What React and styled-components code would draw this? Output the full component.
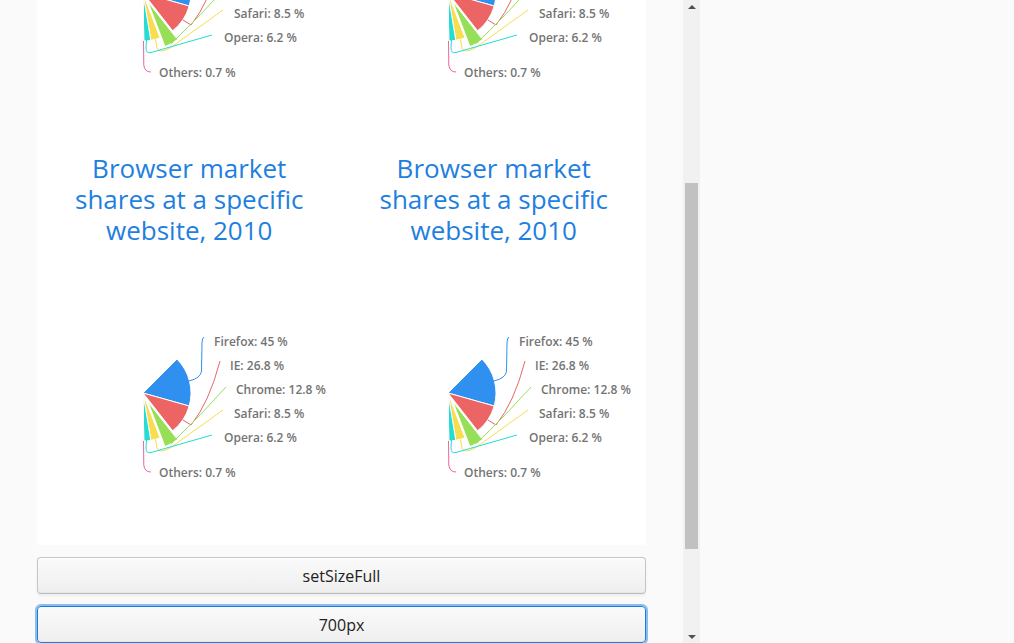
import React, { useLayoutEffect, useRef } from 'react';
import styled, { createGlobalStyle } from 'styled-components';

const GlobalStyle = createGlobalStyle`
  html, body {
    margin: 0;
    padding: 0;
    background: #fafafa;
  }
  body {
    font-family: "Open Sans", "Liberation Sans", sans-serif;
  }
`;

const Frame = styled.div`
  display: flex;
  width: 700px;
  height: 643px;
`;

const Scroller = styled.div`
  width: 683px;
  height: 100%;
  overflow: hidden;
`;

const ScrollBar = styled.div`
  width: 17px;
  height: 100%;
  background: #f1f1f1;
  display: flex;
  flex-direction: column;
  align-items: center;
`;

const Arrow = styled.div`
  flex: 0 0 15px;
  width: 100%;
  display: flex;
  align-items: center;
  justify-content: center;

  &::before {
    content: '';
    width: 0;
    height: 0;
    border-left: 4px solid transparent;
    border-right: 4px solid transparent;
    ${(p) => (p.$down ? 'border-top' : 'border-bottom')}: 4px solid #505050;
    margin-top: ${(p) => (p.$down ? '3px' : '-1px')};
  }
`;

const Track = styled.div`
  flex: 1;
  width: 100%;
  display: flex;
  flex-direction: column;
  align-items: center;
`;

const Thumb = styled.div`
  width: 13px;
  background: #c1c1c1;
`;

const Content = styled.div`
  width: 609px;
  padding: 37px 0 44px 37px;
  display: flex;
  flex-direction: column;
  gap: 12px;
`;

const Panel = styled.div`
  background: #fff;
  display: grid;
  grid-template-columns: repeat(2, 1fr);
`;

const Chart = styled.div`
  height: 400px;
  display: flex;
  flex-direction: column;
  align-items: center;
`;

const Title = styled.div`
  box-sizing: border-box;
  height: 101px;
  padding-top: 8px;
  max-width: 250px;
  font-size: 26px;
  line-height: 31px;
  text-align: center;
  color: #1f7fe0;
`;

const PieSvg = styled.svg`
  align-self: stretch;
  width: 100%;
  height: 299px;
  overflow: visible;
`;

const Label = styled.text`
  font-family: "Open Sans", "Liberation Sans", sans-serif;
  font-size: 12px;
  font-weight: 600;
  fill: #747474;
`;

const Button = styled.button`
  height: 37px;
  width: 100%;
  padding: 0 16px;
  font-family: "Open Sans", "Liberation Sans", sans-serif;
  font-size: 16px;
  color: #222;
  border: 1px solid ${(p) => (p.$focused ? '#197de1' : '#c5c5c5')};
  border-bottom-color: ${(p) => (p.$focused ? '#197de1' : '#bcbcbc')};
  border-radius: 4px;
  background: linear-gradient(to bottom, #fafafa 2%, #efefef 98%);
  box-shadow: ${(p) =>
    p.$focused
      ? 'inset 0 1px 0 #fff, inset 0 -1px 0 #e7e7e7, 0 0 0 2px rgba(25, 125, 225, 0.5)'
      : 'inset 0 1px 0 #fff, inset 0 -1px 0 #e7e7e7, 0 2px 3px rgba(0, 0, 0, 0.05)'};
  outline: none;
  cursor: pointer;
`;

// Browser shares, drawn as a 45deg..180deg pie (screen angles -45..90)
const DATA = [
  { name: 'Firefox', y: 45, color: '#3090F0', label: [71, -51],
    connector: 'M 61 -56 Q 59 -55 59 -50 L 58.5 -22 Q 58 -15 46 -12' },
  { name: 'IE', y: 26.8, color: '#EC6464', label: [87, -27],
    connector: 'M 77 -32 Q 66 10 48 32 L 40 27' },
  { name: 'Chrome', y: 12.8, color: '#98DF58', label: [93, -3], sliced: true,
    connector: 'M 83 -6 Q 58 22 30 49 L 28.5 50.5' },
  { name: 'Safari', y: 8.5, color: '#F9DD51', label: [91, 21],
    connector: 'M 80 17 L 27 55 Q 16 61 14 55 L 12.5 46.5' },
  { name: 'Opera', y: 6.2, color: '#24DCD4', label: [81, 45],
    connector: 'M 69 42 L 8 59.5 Q 3 61 3 55 L 3.5 47' },
  { name: 'Others', y: 0.7, color: '#EC64A5', label: [16, 80],
    connector: 'M 0.5 48 L 0.8 72 Q 1.5 79 8 79' },
];

const R = 48;
const START = -45;
const SPAN = 135;
const SCROLL_TOP = 292;

function sectorPath(a1, a2, ox, oy) {
  const rad = (a) => (a * Math.PI) / 180;
  const x1 = ox + R * Math.cos(rad(a1));
  const y1 = oy + R * Math.sin(rad(a1));
  const x2 = ox + R * Math.cos(rad(a2));
  const y2 = oy + R * Math.sin(rad(a2));
  return `M ${ox} ${oy} L ${x1} ${y1} A ${R} ${R} 0 0 1 ${x2} ${y2} Z`;
}

function PieChart() {
  const total = DATA.reduce((s, d) => s + d.y, 0);
  let angle = START;
  const slices = DATA.map((d) => {
    const a1 = angle;
    const a2 = angle + (d.y / total) * SPAN;
    angle = a2;
    const mid = ((a1 + a2) / 2) * (Math.PI / 180);
    const off = d.sliced ? 10 : 0;
    return { ...d, path: sectorPath(a1, a2, off * Math.cos(mid), off * Math.sin(mid)) };
  });

  return (
    <Chart>
      <Title>Browser market shares at a specific website, 2010</Title>
      <PieSvg>
        <g transform="translate(106 147)">
          {slices.map((s) => (
            <path key={s.name} d={s.path} fill={s.color} stroke="#fff" strokeWidth="1" strokeLinejoin="round" />
          ))}
          {slices.map((s) => (
            <path key={s.name + '-c'} d={s.connector} fill="none" stroke={s.color} strokeWidth="1" />
          ))}
          {slices.map((s) => (
            <Label key={s.name + '-l'} x={s.label[0]} y={s.label[1]} dy="0.35em">
              {s.name}: {s.y} %
            </Label>
          ))}
        </g>
      </PieSvg>
    </Chart>
  );
}

export default function App() {
  const scroller = useRef(null);

  useLayoutEffect(() => {
    if (scroller.current) scroller.current.scrollTop = SCROLL_TOP;
  }, []);

  return (
    <>
      <GlobalStyle />
      <Frame>
        <Scroller ref={scroller}>
          <Content>
            <Panel>
              <PieChart />
              <PieChart />
              <PieChart />
              <PieChart />
            </Panel>
            <Button>setSizeFull</Button>
            <Button $focused>700px</Button>
            <Button>400px</Button>
            <Button>setSizeUndefined</Button>
          </Content>
        </Scroller>
        <ScrollBar>
          <Arrow />
          <Track>
            <Thumb style={{ marginTop: 168, height: 366 }} />
          </Track>
          <Arrow $down />
        </ScrollBar>
      </Frame>
    </>
  );
}
